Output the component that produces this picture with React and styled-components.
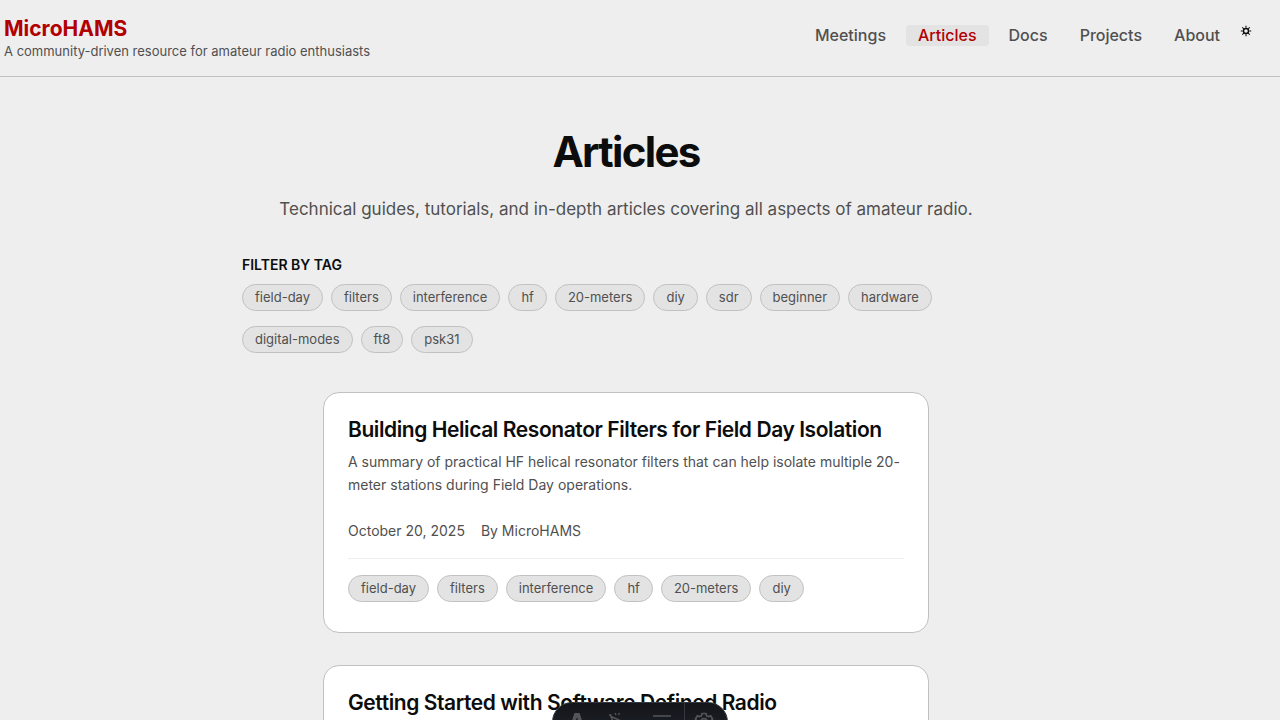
import React from "react";
import styled, { createGlobalStyle } from "styled-components";

const Global = createGlobalStyle`
  *, *::before, *::after { box-sizing: border-box; }
  html { scrollbar-width: none; }
  body {
    margin: 0;
    background: #eeeeee;
    color: #0c0c0c;
    font-family: Inter, "Liberation Sans", sans-serif;
    -webkit-font-smoothing: antialiased;
  }
  h1, h2, p, ul { margin: 0; padding: 0; }
  a { color: inherit; text-decoration: none; }
`;

const Header = styled.header`
  display: flex;
  justify-content: space-between;
  align-items: flex-start;
  padding: 16px 28px 16px 4px;
  border-bottom: 1px solid #c1c1c1;
`;

const Brand = styled.a`
  display: block;
  color: #b20000;
  font-size: 21px;
  font-weight: 700;
  line-height: 25px;
`;

const Tagline = styled.p`
  margin-top: 1px;
  color: #505050;
  font-size: 13px;
  line-height: 18px;
`;

const Nav = styled.nav`
  display: flex;
  align-items: center;
  gap: 8px;
  padding-top: 9px;
`;

const NavLink = styled.a`
  padding: 0 12px;
  border-radius: 4px;
  font-size: 16px;
  font-weight: 500;
  line-height: 21px;
  color: ${(p) => (p.$active ? "#b20000" : "#505050")};
  background: ${(p) => (p.$active ? "#e3e3e3" : "transparent")};
`;

const ThemeButton = styled.button`
  display: flex;
  align-self: flex-start;
  padding: 0;
  border: 0;
  background: none;
  color: #0c0c0c;
`;

const Main = styled.main`
  padding: 48px 28px 48px 0;
`;

const Column = styled.div`
  max-width: 768px;
  margin: 0 auto;
`;

const Title = styled.h1`
  font-size: 42px;
  font-weight: 700;
  line-height: 53px;
  letter-spacing: -0.04em;
  text-align: center;
`;

const Lead = styled.p`
  margin-top: 16px;
  color: #505050;
  font-size: 17px;
  line-height: 30px;
  text-align: center;
`;

const FilterTitle = styled.h2`
  margin-top: 32px;
  font-size: 14px;
  font-weight: 600;
  line-height: 18px;
  text-transform: uppercase;
`;

const TagList = styled.ul`
  display: flex;
  flex-wrap: wrap;
  gap: 15px 8px;
  list-style: none;
`;

const FilterTags = styled(TagList)`
  max-width: 704px;
  margin-top: 10px;
`;

const Tag = styled.a`
  display: block;
  padding: 0 12px;
  border: 1px solid #c1c1c1;
  border-radius: 14px;
  background: #e3e3e3;
  color: #505050;
  font-size: 13px;
  line-height: 25px;
`;

const Articles = styled.div`
  display: flex;
  flex-direction: column;
  gap: 32px;
  max-width: 606px;
  margin: 39px auto 0;
`;

const Card = styled.article`
  padding: 24px 24px 30px;
  border: 1px solid #c1c1c1;
  border-radius: 16px;
  background: #ffffff;
`;

const CardTitle = styled.h2`
  font-size: 21px;
  font-weight: 600;
  line-height: 26px;
  letter-spacing: -0.02em;
`;

const Summary = styled.p`
  margin-top: 7px;
  color: #505050;
  font-size: 14px;
  line-height: 23px;
`;

const Meta = styled.div`
  display: flex;
  gap: 16px;
  margin-top: 23px;
  padding-bottom: 16px;
  border-bottom: 1px solid #eeeeee;
  color: #505050;
  font-size: 14px;
  line-height: 23px;
`;

const CardTags = styled(TagList)`
  margin-top: 16px;
`;

const Toolbar = styled.div`
  position: fixed;
  bottom: -22px;
  left: 50%;
  display: flex;
  transform: translateX(-50%);
  overflow: hidden;
  border: 1px solid #343841;
  border-radius: 20px;
  background: linear-gradient(180deg, #13151a, #21242d);
`;

const ToolButton = styled.button`
  display: flex;
  align-items: center;
  justify-content: center;
  width: 44px;
  height: 38px;
  padding: 0;
  border: 0;
  background: none;
  color: #53555a;
  &:first-child { padding-left: 4px; }
  &:last-child { padding-right: 4px; border-left: 1px solid #343841; }
  &:first-child, &:last-child { width: 43px; }
`;

const SunIcon = () => (
  <svg width="12" height="12" viewBox="0 0 12 12" fill="none" stroke="currentColor" aria-hidden="true">
    <circle cx="6" cy="6" r="2.5" strokeWidth="1.4" />
    <path d="M6 .8v2M6 9.2v2M.8 6h2M9.2 6h2M2.300 2.300l1.500 1.500M8.200 8.200l1.500 1.500M9.700 2.300 8.200 3.800M3.800 8.200 2.300 9.700" strokeWidth="1.1" />
  </svg>
);

const AstroIcon = () => (
  <svg width="20" height="20" viewBox="0 0 20 20" fill="currentColor" aria-hidden="true">
    <path d="M7.200 1.600C7.400 1.200 7.800 1 8.300 1h3.400c.5 0 .9.200 1.100.6l4.200 13.600c-1.500-.7-3-1.100-4.700-1.400L10.400 6c-.1-.3-.7-.3-.8 0L7.800 13.800c-1.700.3-3.300.7-4.800 1.400z" />
    <path d="M6.500 15.600c2 1.200 5.200 1.200 7 0 .3 2-1.200 2.500-2 4-.8-1.600-2.500-.8-2.700.3-1.500-.8-2.800-2.300-2.300-4.300z" />
  </svg>
);

const InspectIcon = () => (
  <svg width="20" height="20" viewBox="0 0 20 20" fill="none" stroke="currentColor" strokeWidth="1.400" aria-hidden="true">
    <path d="m3 4.500 16 7-7 2-3 6zM7 1l1 2M11.500 1l-1 2M1 3h2.500" />
  </svg>
);

const AuditIcon = () => (
  <svg width="20" height="20" viewBox="0 0 20 20" fill="none" stroke="currentColor" strokeWidth="1.500" aria-hidden="true">
    <path d="M1 4h18M1 9.500h9M1 15.500h7M11 13l3 3 5-7.500" />
  </svg>
);

const GearIcon = () => (
  <svg width="20" height="20" viewBox="0 0 20 20" fill="none" stroke="currentColor" strokeWidth="1.700" strokeLinejoin="round" aria-hidden="true">
    <path d="M8 1.500h4l.6 2.400 1.500.7 2.500-.8 2 3.400-1.900 1.900v2.200l1.900 1.900-2 3.400-2.500-.8-1.500.8L12 19H8l-.6-2.400-1.500-.8-2.500.8-2-3.400 1.900-1.900V9.100L1.400 7.200l2-3.400 2.500.8 1.500-.7z" />
    <circle cx="10" cy="10.200" r="3.500" />
  </svg>
);

const links = ["Meetings", "Articles", "Docs", "Projects", "About"];
const filters = ["field-day", "filters", "interference", "hf", "20-meters", "diy", "sdr", "beginner", "hardware", "digital-modes", "ft8", "psk31"];

const Tags = ({ as: List, items }) => (
  <List>
    {items.map((t) => (
      <li key={t}><Tag href={`#${t}`}>{t}</Tag></li>
    ))}
  </List>
);

export default function App() {
  return (
    <>
      <Global />
      <Header>
        <div>
          <Brand href="#home">MicroHAMS</Brand>
          <Tagline>A community-driven resource for amateur radio enthusiasts</Tagline>
        </div>
        <Nav>
          {links.map((l) => (
            <NavLink key={l} href={`#${l.toLowerCase()}`} $active={l === "Articles"}>{l}</NavLink>
          ))}
          <ThemeButton aria-label="Toggle theme"><SunIcon /></ThemeButton>
        </Nav>
      </Header>
      <Main>
        <Column>
          <Title>Articles</Title>
          <Lead>Technical guides, tutorials, and in-depth articles covering all aspects of amateur radio.</Lead>
          <FilterTitle>Filter by tag</FilterTitle>
          <Tags as={FilterTags} items={filters} />
          <Articles>
            <Card>
              <CardTitle><a href="#helical">Building Helical Resonator Filters for Field Day Isolation</a></CardTitle>
              <Summary>A summary of practical HF helical resonator filters that can help isolate multiple 20-meter stations during Field Day operations.</Summary>
              <Meta><time dateTime="2025-10-20">October 20, 2025</time><span>By MicroHAMS</span></Meta>
              <Tags as={CardTags} items={filters.slice(0, 6)} />
            </Card>
            <Card>
              <CardTitle><a href="#sdr-start">Getting Started with Software Defined Radio</a></CardTitle>
            </Card>
          </Articles>
        </Column>
      </Main>
      <Toolbar role="toolbar" aria-label="Developer tools">
        <ToolButton aria-label="Menu"><AstroIcon /></ToolButton>
        <ToolButton aria-label="Inspect"><InspectIcon /></ToolButton>
        <ToolButton aria-label="Audit"><AuditIcon /></ToolButton>
        <ToolButton aria-label="Settings"><GearIcon /></ToolButton>
      </Toolbar>
    </>
  );
}
